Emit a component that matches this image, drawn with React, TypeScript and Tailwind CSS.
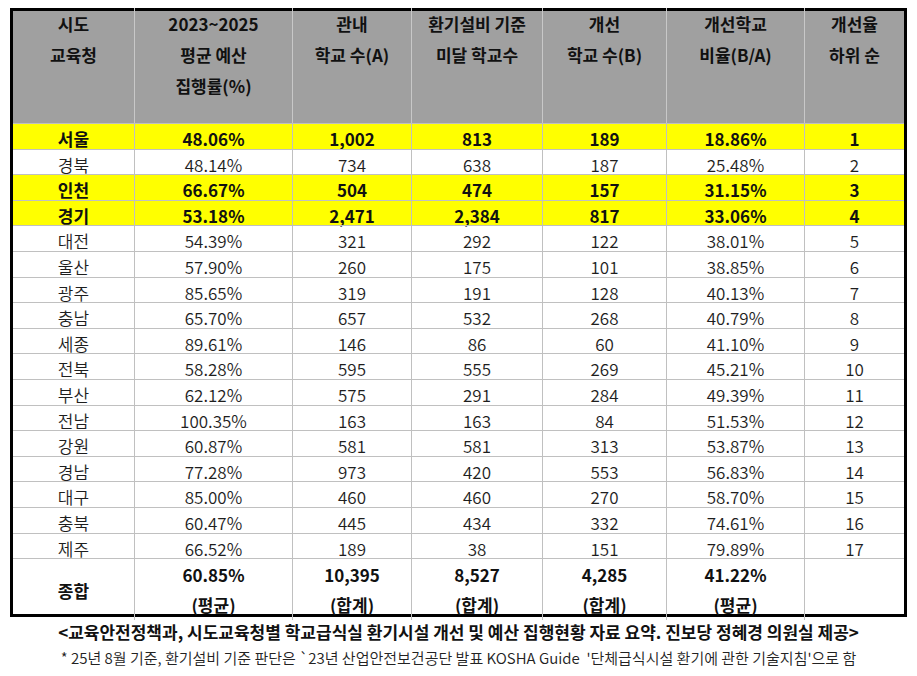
const font = { fontFamily: '"Noto Sans CJK KR", "Noto Sans", sans-serif' }

type Row = {
  region: string
  rate: string
  schools: string
  below: string
  improved: string
  ratio: string
  rank: number
  highlight?: boolean
}

const rows: Row[] = [
  { region: '서울', rate: '48.06%', schools: '1,002', below: '813', improved: '189', ratio: '18.86%', rank: 1, highlight: true },
  { region: '경북', rate: '48.14%', schools: '734', below: '638', improved: '187', ratio: '25.48%', rank: 2 },
  { region: '인천', rate: '66.67%', schools: '504', below: '474', improved: '157', ratio: '31.15%', rank: 3, highlight: true },
  { region: '경기', rate: '53.18%', schools: '2,471', below: '2,384', improved: '817', ratio: '33.06%', rank: 4, highlight: true },
  { region: '대전', rate: '54.39%', schools: '321', below: '292', improved: '122', ratio: '38.01%', rank: 5 },
  { region: '울산', rate: '57.90%', schools: '260', below: '175', improved: '101', ratio: '38.85%', rank: 6 },
  { region: '광주', rate: '85.65%', schools: '319', below: '191', improved: '128', ratio: '40.13%', rank: 7 },
  { region: '충남', rate: '65.70%', schools: '657', below: '532', improved: '268', ratio: '40.79%', rank: 8 },
  { region: '세종', rate: '89.61%', schools: '146', below: '86', improved: '60', ratio: '41.10%', rank: 9 },
  { region: '전북', rate: '58.28%', schools: '595', below: '555', improved: '269', ratio: '45.21%', rank: 10 },
  { region: '부산', rate: '62.12%', schools: '575', below: '291', improved: '284', ratio: '49.39%', rank: 11 },
  { region: '전남', rate: '100.35%', schools: '163', below: '163', improved: '84', ratio: '51.53%', rank: 12 },
  { region: '강원', rate: '60.87%', schools: '581', below: '581', improved: '313', ratio: '53.87%', rank: 13 },
  { region: '경남', rate: '77.28%', schools: '973', below: '420', improved: '553', ratio: '56.83%', rank: 14 },
  { region: '대구', rate: '85.00%', schools: '460', below: '460', improved: '270', ratio: '58.70%', rank: 15 },
  { region: '충북', rate: '60.47%', schools: '445', below: '434', improved: '332', ratio: '74.61%', rank: 16 },
  { region: '제주', rate: '66.52%', schools: '189', below: '38', improved: '151', ratio: '79.89%', rank: 17 },
]

const headers = [
  ['시도', '교육청'],
  ['2023~2025', '평균 예산', '집행률(%)'],
  ['관내', '학교 수(A)'],
  ['환기설비 기준', '미달 학교수'],
  ['개선', '학교 수(B)'],
  ['개선학교', '비율(B/A)'],
  ['개선율', '하위 순'],
]

const totals = [
  ['60.85%', '(평균)'],
  ['10,395', '(합계)'],
  ['8,527', '(합계)'],
  ['4,285', '(합계)'],
  ['41.22%', '(평균)'],
]

const cols = 'grid grid-cols-[121px_158px_119px_131px_124px_138px_100px]'

export default function App() {
  return (
    <div className="h-[676px] w-[917px] bg-white text-[#1a1a1a]" style={font}>
      <div className="pl-[10px] pt-[8px]">
        <div className="w-[897px] border-[3px] border-black">
          <div className={`${cols} h-[112px] bg-[#a0a0a0] font-bold text-[17px] leading-[31px] text-[#111]`}>
            {headers.map((lines, i) => (
              <div key={i} className={`flex flex-col items-center -mt-[3px] ${i > 0 ? 'border-l border-[#c8c8c8]' : ''}`}>
                {lines.map((t) => (
                  <span key={t}>{t}</span>
                ))}
              </div>
            ))}
          </div>

          {rows.map((r) => {
            const cells = [r.region, r.rate, r.schools, r.below, r.improved, r.ratio, String(r.rank)]
            return (
              <div
                key={r.region}
                className={`${cols} h-[25.6px] text-[17px] leading-[22px] ${r.highlight ? 'bg-[#ffff00] font-bold text-[#111]' : 'bg-white font-[350] text-[#1e1e1e]'}`}
              >
                {cells.map((c, i) => (
                  <div
                    key={i}
                    className={`flex items-center justify-center border-t border-[#c0c0c0] pt-[4px] ${i > 0 ? 'border-l' : ''}`}
                  >
                    {c}
                  </div>
                ))}
              </div>
            )
          })}

          <div className={`${cols} h-[56px] text-[17px] font-bold leading-[30px] text-[#111]`}>
            <div className="flex items-center justify-center border-t border-[#c0c0c0] pt-[2px]">종합</div>
            {totals.map(([v, n], i) => (
              <div key={i} className="flex flex-col items-center justify-center border-t border-l border-[#c0c0c0] pt-[1px]">
                <span>{v}</span>
                <span>{n}</span>
              </div>
            ))}
            <div className="border-t border-l border-[#c0c0c0]" />
          </div>
        </div>
      </div>

      <p className="mt-[3px] text-center text-[17px] font-bold leading-[24px] text-[#111]">
        &lt;교육안전정책과, 시도교육청별 학교급식실 환기시설 개선 및 예산 집행현황 자료 요약. 진보당 정혜경 의원실 제공&gt;
      </p>
      <p className="mt-[4px] text-center text-[15px] font-[350] leading-[20px] text-[#222]">
        * 25년 8월 기준, 환기설비 기준 판단은 `23년 산업안전보건공단 발표 KOSHA Guide &nbsp;'단체급식시설 환기에 관한 기술지침'으로 함
      </p>
    </div>
  )
}
